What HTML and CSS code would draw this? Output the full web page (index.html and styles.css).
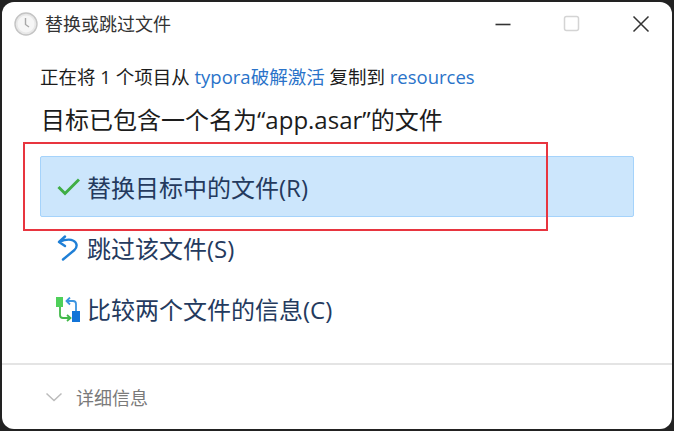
FILE: index.html
```html
<!DOCTYPE html>
<html lang="zh-CN">
<head>
<meta charset="utf-8">
<title>替换或跳过文件</title>
<link rel="stylesheet" href="styles.css">
</head>
<body>
<div class="window">
  <header class="titlebar">
    <svg class="app-icon" width="24" height="24" viewBox="0 0 24 24">
      <circle cx="12" cy="12" r="11" fill="#e8e8e8" stroke="#c4c4c4" stroke-width="1.4"/>
      <circle cx="12" cy="12" r="8.500" fill="#f6f6f6"/>
      <path d="M11.500 6v6.500l3.500 2.500" fill="none" stroke="#a8a8a8" stroke-width="1.400"/>
    </svg>
    <span class="title">替换或跳过文件</span>
    <div class="controls">
      <svg class="ctl" width="18" height="18" viewBox="0 0 18 18"><path d="M1.500 9.500h15" stroke="#333" stroke-width="1.600"/></svg>
      <svg class="ctl" width="18" height="18" viewBox="0 0 18 18"><rect x="1.500" y="1.500" width="14" height="14" rx="2" fill="none" stroke="#d4d4d4" stroke-width="1.500"/></svg>
      <svg class="ctl" width="18" height="18" viewBox="0 0 18 18"><path d="M1.500 1.500l15 15M16.500 1.500l-15 15" stroke="#333" stroke-width="1.500"/></svg>
    </div>
  </header>
  <main class="content">
    <p class="status">正在将 1 个项目从 <a class="link">typora破解激活</a> 复制到 <a class="link">resources</a></p>
    <h1 class="heading">目标已包含一个名为“app.asar”的文件</h1>
    <ul class="options">
      <li class="option selected">
        <svg class="opt-icon" width="24" height="24" viewBox="0 0 24 24"><path d="M2.500 12l6.500 6.500L23 4.500" fill="none" stroke="#3fae45" stroke-width="3"/></svg>
        <span>替换目标中的文件(R)</span>
      </li>
      <li class="option">
        <svg class="opt-icon" width="24" height="28" viewBox="0 0 24 28"><path d="M9 2.500L3 8l6 4M3 8C9 5.500 14 5 17 6.500C21.500 8.500 21.500 13 18.500 16L7 25.500" fill="none" stroke="#1f7fd6" stroke-width="2.400" stroke-linecap="round" stroke-linejoin="round"/></svg>
        <span>跳过该文件(S)</span>
      </li>
      <li class="option">
        <svg class="opt-icon compare-icon" width="24" height="25" viewBox="0 0 24 25"><rect x="0" y="0" width="7" height="10" fill="#4fd05a"/><rect x="16" y="14" width="8" height="11" fill="#1274d8"/><path d="M4 10v8a3 3 0 0 0 3 3h7M11 18l3.500 3-3.500 3" fill="none" stroke="#43b94b" stroke-width="1.800"/><path d="M20 14V7a3 3 0 0 0-3-3h-6M14 .5L10.500 4l3.500 3.500" fill="none" stroke="#3b94e0" stroke-width="1.800"/></svg>
        <span>比较两个文件的信息(C)</span>
      </li>
    </ul>
  </main>
  <footer class="details">
    <svg class="chev" width="18" height="10" viewBox="0 0 18 10"><path d="M1.500 1.500L9 8.500l7.500-7" fill="none" stroke="#bbb" stroke-width="1.500"/></svg>
    <span>详细信息</span>
  </footer>
  <div class="highlight"></div>
</div>
</body>
</html>
```
FILE: styles.css
```css
* { box-sizing: border-box; }
html, body { margin: 0; padding: 0; }
body {
  width: 674px;
  height: 431px;
  background: #222;
  overflow: hidden;
  padding: 2px;
  font-family: "Open Sans", "Noto Sans CJK SC", sans-serif;
  color: #1c1c1c;
}
.window {
  position: relative;
  height: 427px;
  background: #fff;
  border-radius: 12px;
  display: flex;
  flex-direction: column;
}
.titlebar {
  height: 44px;
  display: flex;
  align-items: center;
  padding: 0 22px 0 12px;
  flex: none;
}
.app-icon { flex: none; }
.title {
  margin-left: 7px;
  font-size: 18px;
  line-height: 24px;
  color: #333;
}
.controls {
  margin-left: auto;
  display: flex;
  gap: 51px;
}
.content {
  flex: 1;
  padding: 19px 38px 0;
}
.status {
  margin: 0;
  font-size: 18.500px;
  line-height: 24px;
}
.link { color: #2a73c9; }
.heading {
  margin: 14px 0 0 1px;
  font-size: 24px;
  line-height: 34px;
  font-weight: 400;
}
.options {
  list-style: none;
  margin: 19px 0 0;
  padding: 0;
  display: flex;
  flex-direction: column;
  width: 594px;
}
.option {
  height: 61px;
  display: flex;
  align-items: center;
  font-size: 24px;
  color: #243a5e;
  padding-left: 15px;
  gap: 7px;
  border: 1px solid transparent;
}
.option.selected {
  background: #cce6fc;
  border-color: #a5d3fb;
  border-radius: 2px;
}
.opt-icon { flex: none; }
.compare-icon { margin-top: 2px; }
.details {
  flex: none;
  height: 66px;
  border-top: 2px solid #e4e4e4;
  display: flex;
  align-items: center;
  padding-left: 43px;
  gap: 13px;
  font-size: 18px;
  color: #7a7a7a;
}
.highlight {
  position: absolute;
  left: 21px;
  top: 140px;
  width: 525px;
  height: 89px;
  border: 2px solid #e8353f;
}
```
